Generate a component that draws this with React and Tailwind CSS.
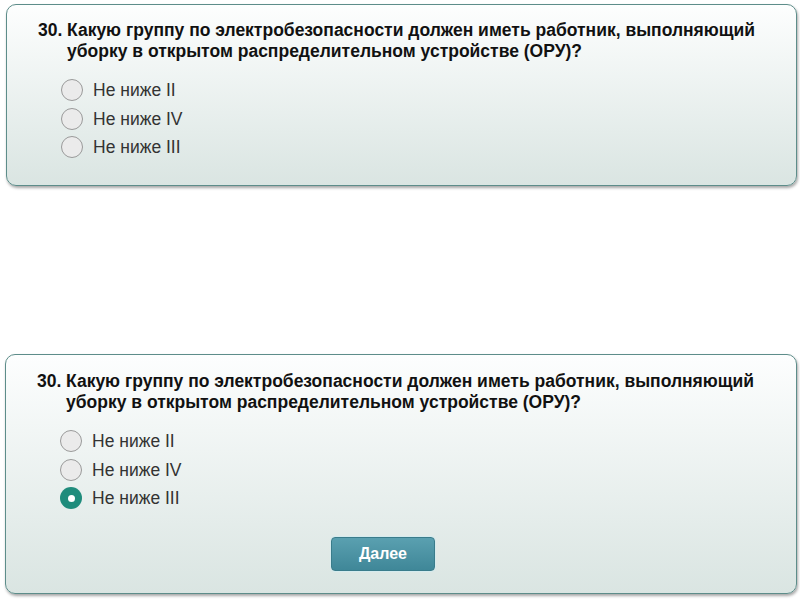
import React, { useState } from 'react';

const options = ['Не ниже II', 'Не ниже IV', 'Не ниже III'];

const Radio = ({ checked }) => (
    <span
        className={`w-[22px] h-[22px] rounded-full flex items-center justify-center shrink-0 ${checked
                ? 'bg-[#1f8c7c]'
                : 'bg-[#ebebeb] border border-[#9a9a9a]'
            }`}
    >
        {checked && <span className="w-[7px] h-[7px] rounded-full bg-white" />}
    </span>
);

const Question = ({ selected, onSelect, showNext, className }) => (
    <div
        className={`rounded-[10px] border border-[#5d8d8a] bg-gradient-to-b from-[#fdfefe] to-[#dae5e2] shadow-[1px_2px_3px_rgba(0,0,0,0.35)] pl-[31px] ${className}`}
    >
        {/* Question text */}
        <div className="flex text-[17.5px] leading-[21px] font-bold text-[#111]">
            <span className="w-[29px] shrink-0">30.</span>
            <span>
                Какую группу по электробезопасности должен иметь работник, выполняющий
                <br />
                уборку в открытом распределительном устройстве (ОРУ)?
            </span>
        </div>

        {/* Options */}
        <div className="mt-[14px] pl-[23px]">
            {options.map((opt, i) => (
                <label
                    key={opt}
                    onClick={() => onSelect && onSelect(i)}
                    className="h-[28.5px] flex items-center gap-[10px] cursor-pointer"
                >
                    <Radio checked={selected === i} />
                    <span className="text-[17.5px] text-[#333]">{opt}</span>
                </label>
            ))}
        </div>

        {showNext && (
            <div className="mt-[24px] pl-[294px]">
                <button className="w-[104px] h-[34px] rounded-[4px] bg-gradient-to-b from-[#5aa0b0] to-[#3f8798] border border-[#3a7c8b] shadow-[0_0_0_1px_#d5ebee] text-white font-bold text-[16px]">
                    Далее
                </button>
            </div>
        )}
    </div>
);

export default function App() {
    const [answer, setAnswer] = useState(2);

    return (
        <div className="w-[800px] h-[600px] bg-white overflow-hidden font-['Liberation_Sans',Arial,sans-serif]">
            <Question
                selected={null}
                className="ml-[6px] mt-[4px] w-[791px] h-[182px] pt-[15px]"
            />
            <Question
                selected={answer}
                onSelect={setAnswer}
                showNext
                className="ml-[5px] mt-[168px] w-[792px] h-[240px] pt-[16px]"
            />
        </div>
    );
}
